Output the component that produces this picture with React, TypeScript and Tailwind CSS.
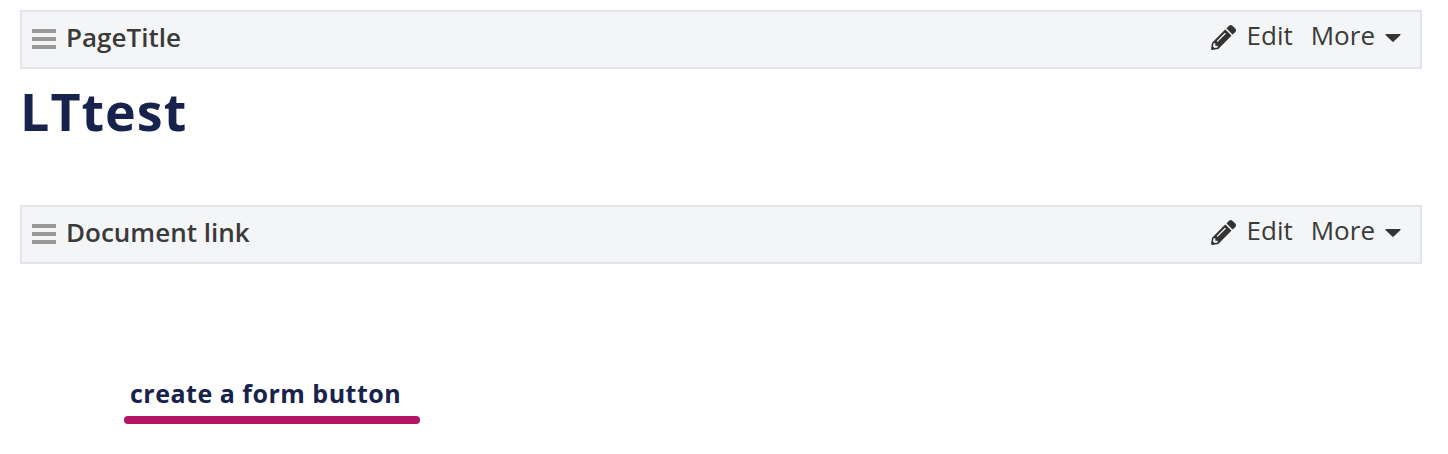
import React from 'react';
import { FaPencilAlt } from 'react-icons/fa';

function BlockBar({ title }: { title: string }) {
  return (
    <div className="flex h-[59px] items-center justify-between border-2 border-[#e3e4e7] bg-[#f4f5f7] pb-[4px] pl-[10px] pr-[19px]">
      <div className="flex items-center gap-[10px]">
        <div className="mt-[3px] flex w-[24px] flex-col gap-[4px]">
          <div className="h-[4px] bg-[#999999]" />
          <div className="h-[4px] bg-[#999999]" />
          <div className="h-[4px] bg-[#999999]" />
        </div>
        <span className="text-[26px] font-semibold text-[#3a3a3a]">{title}</span>
      </div>
      <div className="mb-[5px] flex items-center text-[26px] text-[#3a3a3a]">
        <FaPencilAlt className="mr-[10px] mt-[5px] h-[25px] w-[25px] -translate-x-px text-[#333333]" />
        <span>Edit</span>
        <span className="ml-[18px]">More</span>
        <svg viewBox="0 0 16 8" className="ml-[10px] mt-[5px] h-[8px] w-[16px] fill-[#333333]">
          <path d="M1 0h14q1 0 .5 1L8.7 7.6q-.7.6-1.4 0L.5 1Q0 0 1 0z" />
        </svg>
      </div>
    </div>
  );
}

export default function App() {
  return (
    <div className="h-[454px] w-[1448px] overflow-hidden bg-white pl-[20px] pr-[26px] pt-[10px] font-['Open_Sans',sans-serif]">
      <BlockBar title="PageTitle" />
      <h1 className="mt-[6px] h-[130px] text-[52px] font-bold leading-[72px] tracking-[1px] text-[#17224d]">LTtest</h1>
      <BlockBar title="Document link" />
      <div className="ml-[104px] mt-[112px] w-[296px]">
        <div className="pl-[6px] text-[25px] font-bold leading-[35px] tracking-[0.5px] text-[#17224d]">create a form button</div>
        <div className="mt-[5px] h-[8px] rounded-full bg-[#b31564]" />
      </div>
    </div>
  );
}
